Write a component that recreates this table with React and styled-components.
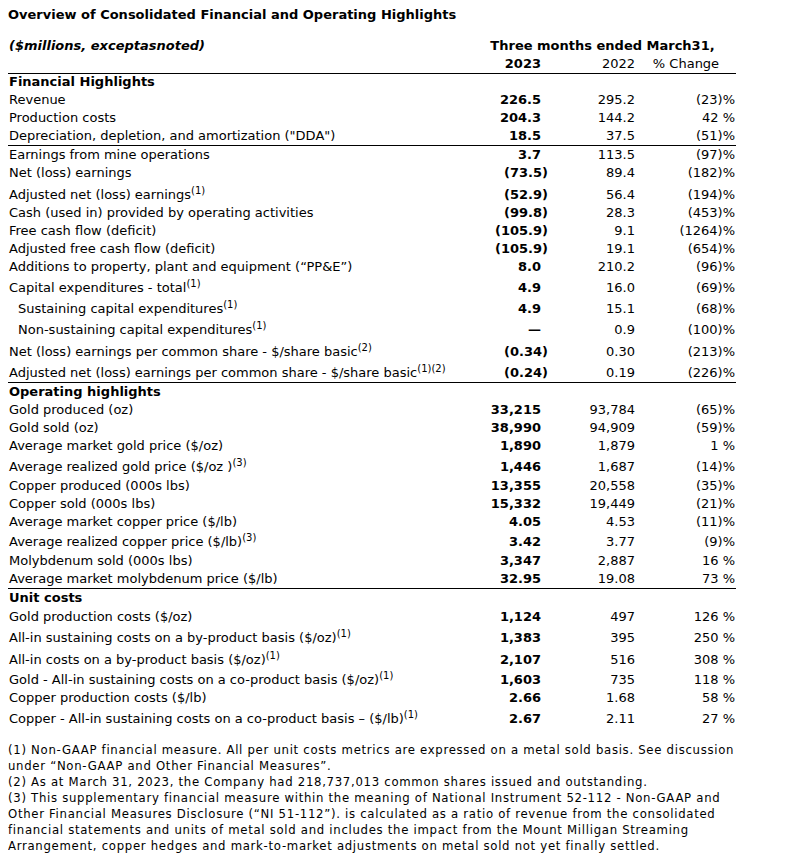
import React from "react";
import styled, { createGlobalStyle } from "styled-components";

const GlobalStyle = createGlobalStyle`
  body {
    margin: 8px;
    background: #fff;
    color: #000;
    font-family: "DejaVu Sans", Verdana, sans-serif;
    font-size: 13px;
  }
`;

const Page = styled.div`
  width: 728px;
`;

const Title = styled.div`
  font-weight: bold;
  line-height: 16px;
  margin-top: -1px;
  margin-bottom: 14px;
`;

const Table = styled.table`
  width: 728px;
  border-collapse: collapse;
  table-layout: fixed;
`;

const Row = styled.tr`
  height: ${(props) => props.h || 18}px;
  border-top: ${(props) => (props.line ? "1px solid #000" : "none")};
`;

const Label = styled.td`
  padding: 0 0 1px ${(props) => (props.indent ? 10 : 1)}px;
  line-height: 16px;
  vertical-align: bottom;
  white-space: nowrap;
  font-weight: ${(props) => (props.bold ? "bold" : "normal")};
  font-style: ${(props) => (props.italic ? "italic" : "normal")};
`;

const Num = styled.td`
  padding: 0 ${(props) => props.pr || 0}px 1px 0;
  line-height: 16px;
  vertical-align: bottom;
  text-align: ${(props) => props.align || "right"};
  white-space: nowrap;
  font-weight: ${(props) => (props.bold ? "bold" : "normal")};
`;

const Sup = styled.sup`
  font-size: 10px;
  line-height: 0;
  vertical-align: 5px;
`;

const Notes = styled.div`
  margin-top: 14px;
  font-family: "DejaVu Sans Condensed", "DejaVu Sans", sans-serif;
  font-stretch: condensed;
  font-size: 13px;
  line-height: 16px;
  letter-spacing: 0.7px;
  white-space: nowrap;
`;

const sections = [
  {
    title: "Financial Highlights",
    rows: [
      { label: "Revenue", a: "226.5", b: "295.2", c: "(23)%" },
      { label: "Production costs", a: "204.3", b: "144.2", c: "42 %" },
      { label: "Depreciation, depletion, and amortization (\"DDA\")", a: "18.5", b: "37.5", c: "(51)%" },
      { label: "Earnings from mine operations", a: "3.7", b: "113.5", c: "(97)%", line: true, h: 19 },
      { label: "Net (loss) earnings", a: "(73.5)", b: "89.4", c: "(182)%" },
      { label: "Adjusted net (loss) earnings", sup: "(1)", a: "(52.9)", b: "56.4", c: "(194)%", h: 22 },
      { label: "Cash (used in) provided by operating activities", a: "(99.8)", b: "28.3", c: "(453)%" },
      { label: "Free cash flow (deficit)", a: "(105.9)", b: "9.1", c: "(1264)%" },
      { label: "Adjusted free cash flow (deficit)", a: "(105.9)", b: "19.1", c: "(654)%" },
      { label: "Additions to property, plant and equipment (\u201CPP&E\u201D)", a: "8.0", b: "210.2", c: "(96)%" },
      { label: "Capital expenditures - total", sup: "(1)", a: "4.9", b: "16.0", c: "(69)%", h: 21 },
      { label: "Sustaining capital expenditures", sup: "(1)", indent: true, a: "4.9", b: "15.1", c: "(68)%", h: 21 },
      { label: "Non-sustaining capital expenditures", sup: "(1)", indent: true, a: "\u2014", b: "0.9", c: "(100)%", h: 21 },
      { label: "Net (loss) earnings per common share - $/share basic", sup: "(2)", a: "(0.34)", b: "0.30", c: "(213)%", h: 22 },
      { label: "Adjusted net (loss) earnings per common share - $/share basic", sup: "(1)(2)", a: "(0.24)", b: "0.19", c: "(226)%", h: 21 },
    ],
  },
  {
    title: "Operating highlights",
    line: true,
    h: 19,
    rows: [
      { label: "Gold produced (oz)", a: "33,215", b: "93,784", c: "(65)%" },
      { label: "Gold sold (oz)", a: "38,990", b: "94,909", c: "(59)%" },
      { label: "Average market gold price ($/oz)", a: "1,890", b: "1,879", c: "1 %" },
      { label: "Average realized gold price ($/oz )", sup: "(3)", a: "1,446", b: "1,687", c: "(14)%", h: 21 },
      { label: "Copper produced (000s lbs)", a: "13,355", b: "20,558", c: "(35)%", h: 19 },
      { label: "Copper sold (000s lbs)", a: "15,332", b: "19,449", c: "(21)%" },
      { label: "Average market copper price ($/lb)", a: "4.05", b: "4.53", c: "(11)%" },
      { label: "Average realized copper price ($/lb)", sup: "(3)", a: "3.42", b: "3.77", c: "(9)%", h: 20 },
      { label: "Molybdenum sold (000s lbs)", a: "3,347", b: "2,887", c: "16 %", h: 19 },
      { label: "Average market molybdenum price ($/lb)", a: "32.95", b: "19.08", c: "73 %" },
    ],
  },
  {
    title: "Unit costs",
    line: true,
    h: 19,
    rows: [
      { label: "Gold production costs ($/oz)", a: "1,124", b: "497", c: "126 %", h: 19 },
      { label: "All-in sustaining costs on a by-product basis ($/oz)", sup: "(1)", a: "1,383", b: "395", c: "250 %", h: 21 },
      { label: "All-in costs on a by-product basis ($/oz)", sup: "(1)", a: "2,107", b: "516", c: "308 %", h: 22 },
      { label: "Gold - All-in sustaining costs on a co-product basis ($/oz)", sup: "(1)", a: "1,603", b: "735", c: "118 %", h: 20 },
      { label: "Copper production costs ($/lb)", a: "2.66", b: "1.68", c: "58 %" },
      { label: "Copper - All-in sustaining costs on a co-product basis \u2013 ($/lb)", sup: "(1)", a: "2.67", b: "2.11", c: "27 %", h: 21 },
    ],
  },
];

const notes = [
  "(1) Non-GAAP financial measure. All per unit costs metrics are expressed on a metal sold basis. See discussion",
  "under \u201CNon-GAAP and Other Financial Measures\u201D.",
  "(2) As at March 31, 2023, the Company had 218,737,013 common shares issued and outstanding.",
  "(3) This supplementary financial measure within the meaning of National Instrument 52-112 - Non-GAAP and",
  "Other Financial Measures Disclosure (\u201CNI 51-112\u201D). is calculated as a ratio of revenue from the consolidated",
  "financial statements and units of metal sold and includes the impact from the Mount Milligan Streaming",
  "Arrangement, copper hedges and mark-to-market adjustments on metal sold not yet finally settled.",
];

const hang = (v) => (v.endsWith(")") ? 0 : 7);

const App = () => {
  return (
    <Page>
      <GlobalStyle />
      <Title>Overview of Consolidated Financial and Operating Highlights</Title>
      <Table>
        <colgroup>
          <col style={{ width: 461 }} />
          <col style={{ width: 79 }} />
          <col style={{ width: 88 }} />
          <col style={{ width: 100 }} />
        </colgroup>
        <tbody>
          <Row h={18}>
            <Label bold italic>($millions, exceptasnoted)</Label>
            <Num bold colSpan={3} align="center">
              Three months ended March31,
            </Num>
          </Row>
          <Row h={18}>
            <Label />
            <Num bold pr={7}>2023</Num>
            <Num pr={1}>2022</Num>
            <Num align="center">% Change</Num>
          </Row>
          {sections.map((s) => (
            <React.Fragment key={s.title}>
              <Row line h={s.h}>
                <Label bold>{s.title}</Label>
                <Num />
                <Num />
                <Num />
              </Row>
              {s.rows.map((r) => (
                <Row key={r.label} h={r.h} line={r.line}>
                  <Label indent={r.indent}>
                    {r.label}
                    {r.sup && <Sup>{r.sup}</Sup>}
                  </Label>
                  <Num bold pr={hang(r.a)}>{r.a}</Num>
                  <Num pr={1}>{r.b}</Num>
                  <Num pr={1}>{r.c}</Num>
                </Row>
              ))}
            </React.Fragment>
          ))}
        </tbody>
      </Table>
      <Notes>
        {notes.map((n) => (
          <div key={n}>{n}</div>
        ))}
      </Notes>
    </Page>
  );
};

export default App;
